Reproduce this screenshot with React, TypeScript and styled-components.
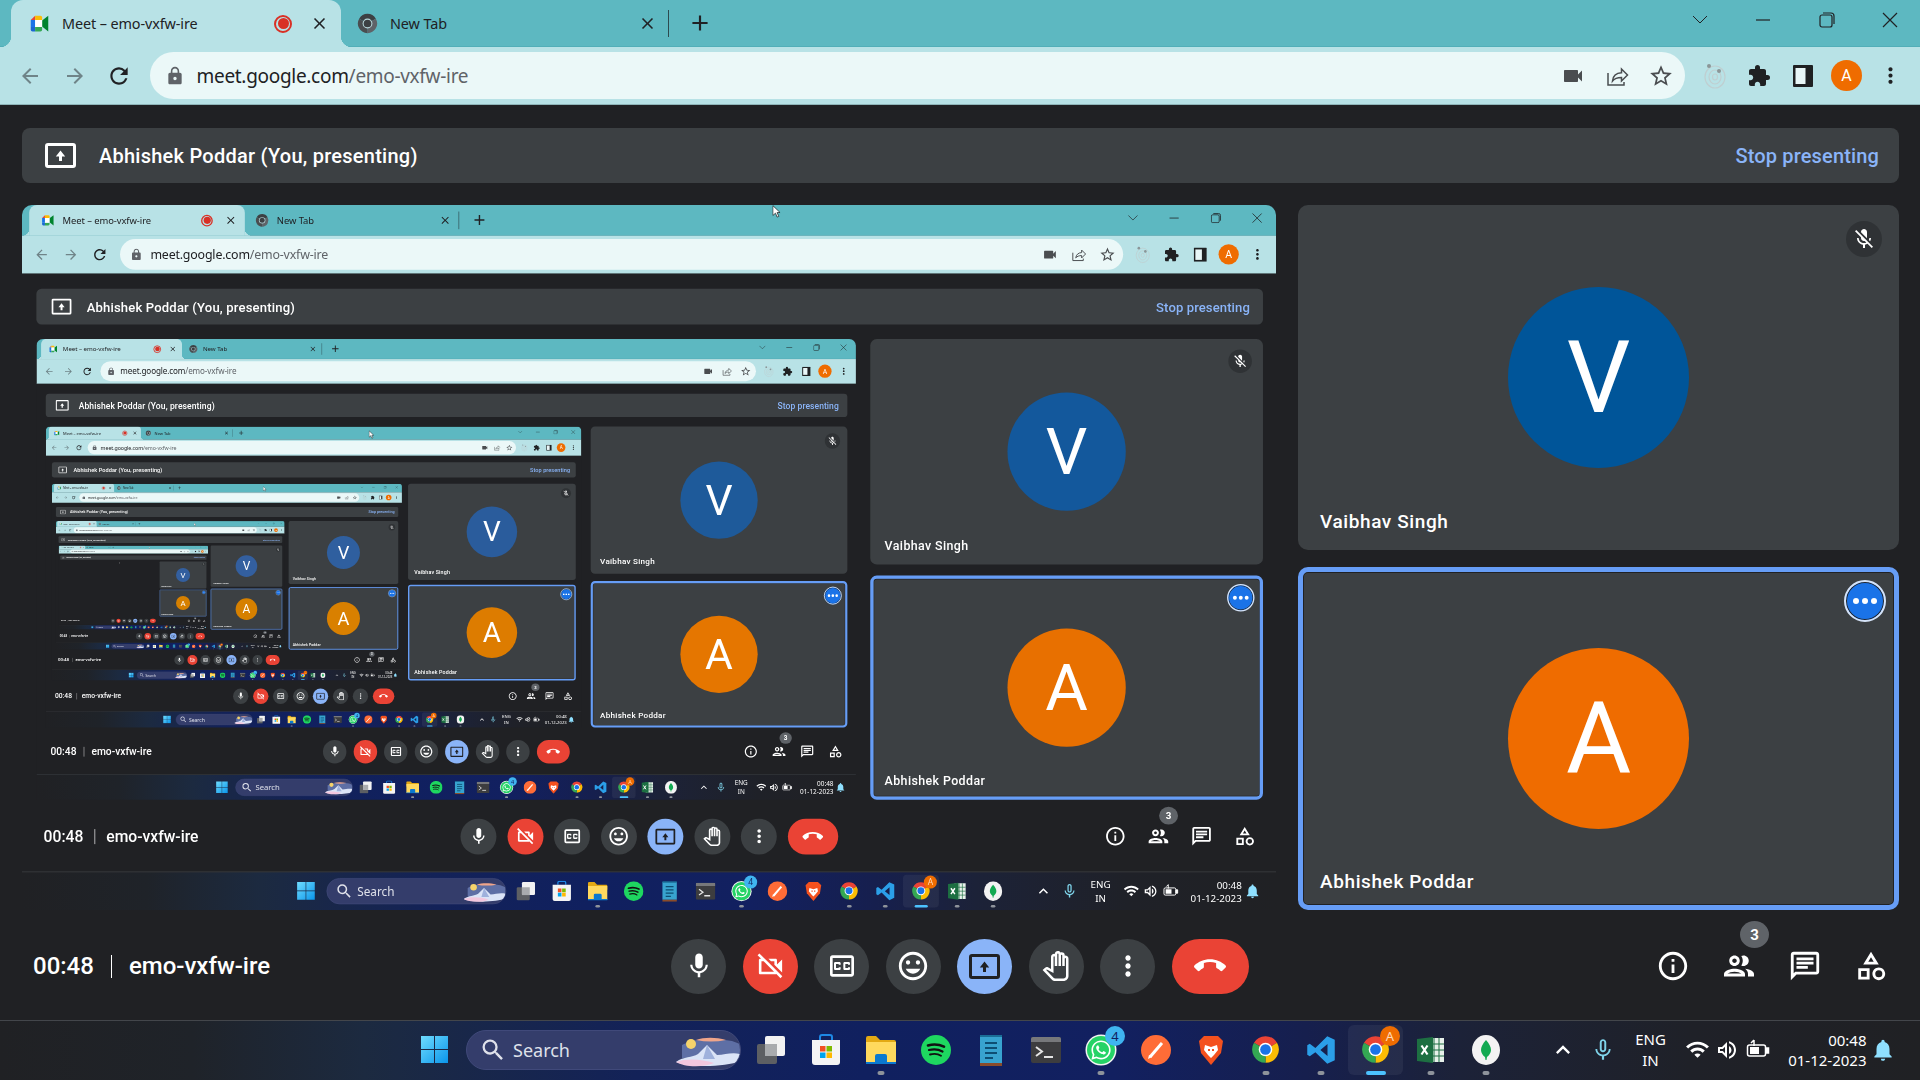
import React from "react";
import styled, { createGlobalStyle } from "styled-components";
import {
  MdMic, MdMicOff, MdOutlineVideocamOff, MdOutlineClosedCaption, MdOutlineMood, MdOutlinePanTool,
  MdMoreVert, MdCallEnd, MdInfoOutline, MdOutlinePeople, MdOutlineChat, MdOutlineCategory, MdLock,
  MdArrowBack, MdArrowForward, MdRefresh, MdClose, MdAdd, MdVideocam, MdStarBorder, MdExtension,
  MdKeyboardArrowUp, MdMicNone, MdWifi, MdOutlineVolumeUp, MdNotifications, MdSearch,
} from "react-icons/md";
import { FaWhatsapp } from "react-icons/fa";

const MAX_DEPTH = 6;
const SHARE_SCALE = 0.6535;
const BLUES = ["#005599", "#13589c", "#1e5a9a", "#2a5c9c", "#2f5f9f", "#335f9f", "#335f9f"];
const ORANGES = ["#ef6c00", "#e87000", "#e57600", "#dd7c00", "#d98000", "#d68000", "#d68000"];
const UI = `"Roboto", "Liberation Sans", sans-serif`;
const WIN = `"Noto Sans", "Open Sans", sans-serif`;

const Global = createGlobalStyle`
  html, body { margin: 0; padding: 0; background: #202124; overflow: hidden; }
  * { box-sizing: border-box; }
`;

const ScreenRoot = styled.div`
  width: 1920px; height: 1080px; display: flex; flex-direction: column;
  background: #202124; overflow: hidden; position: relative; flex: none;
`;

/* ---------- browser chrome ---------- */
const TabStrip = styled.div`
  height: 47px; background: #5db8c1; display: flex; align-items: stretch;
  padding-left: 11px; flex: none; border-bottom: 1px solid #52aeb8;
`;
const ActiveTab = styled.div`
  width: 330px; height: 47px; background: #b8e2e6; border-radius: 12px 12px 0 0;
  display: flex; align-items: center; padding: 0 11px 0 18px; position: relative;
  &::before, &::after {
    content: ""; position: absolute; bottom: 0; width: 11px; height: 11px;
  }
  &::before { left: -11px; background: radial-gradient(circle at 0 0, transparent 11px, #b8e2e6 11.5px); }
  &::after { right: -11px; background: radial-gradient(circle at 100% 0, transparent 11px, #b8e2e6 11.5px); }
`;
const IdleTab = styled.div`
  width: 327px; display: flex; align-items: center; padding: 0 10px 0 16px;
`;
const TabTitle = styled.span`
  font: 400 14.4px ${WIN}; color: #202124; margin-left: 12px; white-space: nowrap; letter-spacing: -0.1px;
`;
const RecDot = styled.span`
  width: 18px; height: 18px; border-radius: 50%; border: 2px solid #d93025; margin-left: auto;
  display: flex; align-items: center; justify-content: center; flex: none;
  &::after { content: ""; width: 11px; height: 11px; border-radius: 50%; background: #d93025; }
`;
const TabClose = styled.span<{ $auto?: boolean }>`
  width: 22px; height: 22px; display: flex; align-items: center; justify-content: center; color: #202124;
  margin-left: ${(p) => (p.$auto ? "auto" : "16px")}; flex: none;
`;
const TabSep = styled.span`
  width: 1px; height: 27px; background: #2c4a4f; align-self: center;
`;
const NewTabBtn = styled.span`
  width: 32px; display: flex; align-items: center; justify-content: center; margin-left: 15px; color: #202124;
`;
const WindowControls = styled.div`
  margin-left: auto; display: grid; grid-template-columns: 64px 62px 66px 60px; color: #202124;
  & > span { display: flex; align-items: center; justify-content: center; height: 40px; }
`;
const Toolbar = styled.div`
  height: 58px; flex: none; background: #b8e2e6; display: flex; align-items: center; padding: 0 8px;
  border-bottom: 1px solid #8fb5b9;
`;
const NavBtn = styled.span<{ $dim?: boolean }>`
  width: 44.5px; display: flex; align-items: center; justify-content: center;
  color: ${(p) => (p.$dim ? "#6f8488" : "#202124")}; flex: none;
`;
const Omnibox = styled.div`
  width: 1535px; height: 47px; margin-left: 8px; border-radius: 24px; background: #ebf8f8;
  display: flex; align-items: center; padding: 0 2px 0 15px; flex: none;
`;
const Url = styled.span`
  font: 400 19px ${WIN}; color: #202124; margin-left: 12px; letter-spacing: -0.3px; white-space: nowrap;
  & > em { font-style: normal; color: #5f6368; }
`;
const OmniIcons = styled.div`margin-left: auto; display: flex; color: #4a4d50;`;
const ToolBtn = styled.span`
  width: 44px; display: flex; align-items: center; justify-content: center; flex: none; color: inherit;
`;
const ToolIcons = styled.div`display: flex; margin-left: 8px; color: #1f2123;`;
const ProfileDot = styled.span`
  width: 31px; height: 31px; border-radius: 50%; background: #ef6c00; color: #fff;
  font: 400 16px ${UI}; display: flex; align-items: center; justify-content: center;
`;

/* ---------- meet page ---------- */
const Page = styled.div`
  flex: 1; min-height: 0; display: flex; flex-direction: column; background: #202124;
`;
const PresentBar = styled.div`
  margin: 23px 21px 22px 22px; height: 55px; background: #3c4043; border-radius: 8px; flex: none;
  display: flex; align-items: center; padding: 0 20px 0 23px;
`;
const PresentTitle = styled.span`
  font: 500 20px ${UI}; color: #fff; margin-left: 23px; letter-spacing: 0.25px; white-space: nowrap;
`;
const StopBtn = styled.span`
  margin-left: auto; font: 500 20px ${UI}; color: #8ab4f8; letter-spacing: 0.15px; white-space: nowrap;
`;
const Stage = styled.div`
  display: grid; grid-template-columns: 1254px 601px; column-gap: 22px; height: 705px;
  margin-left: 22px; flex: none;
`;
const ShareSlot = styled.div`
  width: 1254px; height: 705px; overflow: hidden; border-radius: 10px 10px 0 0; position: relative;
`;
const ScaledFrame = styled.div`
  width: 1920px; height: 1080px; transform: scale(${SHARE_SCALE}); transform-origin: 0 0;
  filter: blur(0.55px); position: relative;
`;
const Cursor = styled.svg<{ $x: number; $y: number }>`
  position: absolute; left: ${(p) => p.$x}px; top: ${(p) => p.$y}px; z-index: 5;
`;
const TileColumn = styled.div`
  display: grid; grid-template-rows: 345px 343px; row-gap: 17px;
`;
const Tile = styled.div<{ $active?: boolean }>`
  background: #3c4043; border-radius: 10px; position: relative; display: flex;
  align-items: center; justify-content: center;
  border: ${(p) => (p.$active ? "5px solid #669df6" : "0")};
  box-shadow: ${(p) => (p.$active ? "inset 0 0 0 1px #202124" : "none")};
`;
const Avatar = styled.div<{ $color: string }>`
  width: 181px; height: 181px; border-radius: 50%; background: ${(p) => p.$color}; color: #fff;
  display: flex; align-items: center; justify-content: center; font: 400 100px ${UI};
`;
const TileName = styled.span<{ $active?: boolean }>`
  position: absolute; left: ${(p) => (p.$active ? 17 : 22)}px; bottom: ${(p) => (p.$active ? 12 : 17)}px;
  font: 500 19px ${UI}; color: #fff; letter-spacing: 0.6px; white-space: nowrap;
`;
const MuteBadge = styled.span`
  position: absolute; top: 16px; right: 17px; width: 36px; height: 36px; border-radius: 50%;
  background: #2f3235; color: #fff; display: flex; align-items: center; justify-content: center;
`;
const MenuBadge = styled.span`
  position: absolute; top: 8px; right: 8px; width: 42px; height: 42px; border-radius: 50%;
  background: #1a73e8; border: 2px solid #d5e3f8; box-shadow: inset 0 0 0 1px #202124;
  display: flex; align-items: center; justify-content: center; gap: 3px;
  & > i { width: 6px; height: 6px; background: #fff; border-radius: 50%; }
`;

/* ---------- controls ---------- */
const ControlBar = styled.div`
  flex: 1; min-height: 0; display: grid; grid-template-columns: 1fr auto 1fr; align-items: center;
  padding: 2px 25px 0 25px;
`;
const MeetingInfo = styled.div`
  display: flex; align-items: center; color: #fff; font: 500 24px ${UI}; white-space: nowrap;
  padding-left: 8px;
`;
const InfoSep = styled.span`
  width: 1px; height: 23px; background: #fff; margin: 0 17px 0 17px;
`;
const CenterButtons = styled.div`display: flex; gap: 16.5px;`;
const RoundBtn = styled.span<{ $bg?: string; $wide?: boolean; $ink?: string }>`
  width: ${(p) => (p.$wide ? 77 : 55)}px; height: 55px; border-radius: 28px;
  background: ${(p) => p.$bg || "#3c4043"}; color: ${(p) => p.$ink || "#fff"};
  display: flex; align-items: center; justify-content: center; flex: none;
`;
const RightButtons = styled.div`
  justify-self: end; display: flex; gap: 18px; color: #fff;
`;
const SideBtn = styled.span`
  width: 48px; height: 48px; display: flex; align-items: center; justify-content: center; position: relative;
`;
const CountBadge = styled.span`
  position: absolute; top: -21px; left: 25px; width: 29px; height: 27px; border-radius: 50%;
  background: #5f6368; color: #fff; font: 700 15px ${UI}; display: flex; align-items: center; justify-content: center;
`;

/* ---------- taskbar ---------- */
const Taskbar = styled.div`
  height: 60px; flex: none; border-top: 1px solid #43464b; display: flex; align-items: center;
  padding: 0 0 2px 407px; color: #fff;
  background: linear-gradient(90deg, #202124 0, #1f2329 10%, #1c2a40 19%, #132258 33%, #10205f 45%,
    #122060 58%, #161f4e 68%, #1c2238 76%, #1f2128 88%, #202124 100%);
`;
const TaskCell = styled.span<{ $on?: boolean }>`
  width: 55px; height: 50px; flex: none; display: flex; align-items: center; justify-content: center;
  position: relative; border-radius: 6px;
  background: ${(p) => (p.$on ? "rgba(255,255,255,.055)" : "transparent")};
`;
const Indicator = styled.i<{ $on?: boolean }>`
  position: absolute; bottom: 0; left: 50%; transform: translateX(-50%); height: 4px; border-radius: 2px;
  width: ${(p) => (p.$on ? 20 : 7)}px; background: ${(p) => (p.$on ? "#4cc2ff" : "#8e939b")};
`;
const SearchPill = styled.div`
  width: 275px; height: 40px; margin: 0 2px 0 4px; border-radius: 20px; background: #343d6b; flex: none;
  display: flex; align-items: center; padding-left: 12px; color: #dfe1ea; position: relative; overflow: hidden;
  border: 1px solid #40497a;
`;
const SearchText = styled.span`font: 400 18px ${WIN}; margin-left: 6px; color: #dfe1ea;`;
const SearchArt = styled.svg`position: absolute; right: 0; top: 0;`;
const TaskBadge = styled.span<{ $bg: string; $ink: string }>`
  position: absolute; top: 1px; right: 3px; width: 20px; height: 20px; border-radius: 50%;
  background: ${(p) => p.$bg}; color: ${(p) => p.$ink}; font: 400 13px ${WIN};
  display: flex; align-items: center; justify-content: center;
`;
const Tray = styled.div`
  margin-left: 29.5px; display: grid; height: 100%; align-items: center; justify-items: center;
  grid-template-columns: 40px 40px 56px 38px 20px 42px 88px 33px;
`;
const LangStack = styled.span`
  font: 400 15px/21px ${WIN}; color: #fff; text-align: center;
`;
const ClockStack = styled.span`
  font: 400 15px/20px ${WIN}; color: #fff; text-align: right; justify-self: end; white-space: nowrap;
`;

/* ---------- drawn icons ---------- */
const MeetLogo = ({ s = 21 }: { s?: number }) => (
  <svg width={s} height={s} viewBox="0 0 24 24">
    <path fill="#ea4335" d="M7 3 2 8h5z" />
    <path fill="#fbbc04" d="M7 3h6a2 2 0 0 1 2 2v3H7z" />
    <path fill="#1a73e8" d="M2 8h5v8H2z" />
    <path fill="#1967d2" d="M2 16h5v5H4a2 2 0 0 1-2-2z" />
    <path fill="#34a853" d="M7 16h8v3a2 2 0 0 1-2 2H7z" />
    <path fill="#00832d" d="M15 8.5v7l7 5.5V3z" />
    <path fill="#fff" d="M7 8h8v8H7z" />
  </svg>
);
const ChromeLogo = ({ s = 29, mono }: { s?: number; mono?: boolean }) => (
  <svg width={s} height={s} viewBox="0 0 24 24">
    <path fill={mono ? "#3c4043" : "#ea4335"} d="M12 12 2.47 6.5A11 11 0 0 1 21.53 6.5z" />
    <path fill={mono ? "#5f6368" : "#fbbc04"} d="M12 12 21.53 6.5A11 11 0 0 1 12 23z" />
    <path fill={mono ? "#4a4d50" : "#34a853"} d="M12 12V23A11 11 0 0 1 2.47 6.5z" />
    <circle cx="12" cy="12" r="5.6" fill={mono ? "#b8d8dc" : "#fff"} />
    <circle cx="12" cy="12" r="4.4" fill={mono ? "#3c4043" : "#1a73e8"} />
  </svg>
);
const PresentIcon = ({ ink = "#fff" }: { ink?: string }) => (
  <svg width="31" height="25" viewBox="0 0 31 25" fill="none">
    <rect x="1.5" y="1.5" width="28" height="22" rx="1.5" stroke={ink} strokeWidth="3" />
    <path fill={ink} d="M14 18h3v-4.500h3.200L15.500 7.500l-4.700 6H14z" />
  </svg>
);
const Chevron = () => (
  <svg width="16" height="10" viewBox="0 0 16 10" fill="none" stroke="#202124" strokeWidth="1"><path d="M1 1l7 7 7-7" /></svg>
);
const Minimize = () => (
  <svg width="16" height="10" viewBox="0 0 16 10" stroke="#202124" strokeWidth="1.2"><path d="M1 5h14" /></svg>
);
const RestoreIcon = () => (
  <svg width="16" height="16" viewBox="0 0 16 16" fill="none" stroke="#202124" strokeWidth="1.2">
    <rect x="1" y="3" width="12" height="12" rx="2" /><path d="M4 1h8a3 3 0 0 1 3 3v8" />
  </svg>
);
const CloseThin = () => (
  <svg width="16" height="16" viewBox="0 0 16 16" stroke="#202124" strokeWidth="1.2"><path d="M1 1l14 14M15 1 1 15" /></svg>
);
const ShareGlyph = () => (
  <svg width="24" height="24" viewBox="0 0 24 24" fill="none" stroke="#4a4d50" strokeWidth="1.5">
    <path d="M3 9v12h16v-3" /><path d="M7.5 17c.5-5 4-8 9-8.2V5l6 6-6 6v-3.6c-4 0-7 1-9 3.6z" />
  </svg>
);
const RadarExt = () => (
  <svg width="24" height="28" viewBox="0 0 24 28" fill="none" stroke="#bfcfd1" strokeWidth="1.2">
    <ellipse cx="12" cy="15" rx="10" ry="11" /><ellipse cx="12" cy="15" rx="6" ry="7" /><ellipse cx="12" cy="15" rx="2.5" ry="3" />
    <circle cx="6" cy="4" r="2" fill="#8b9698" stroke="none" /><circle cx="16" cy="9" r="2" fill="#8b9698" stroke="none" />
  </svg>
);
const SidePanel = () => (
  <svg width="20" height="22" viewBox="0 0 20 22">
    <rect width="20" height="22" rx="1" fill="#1f2123" /><rect x="2.5" y="3" width="10" height="16" fill="#e8f6f7" />
  </svg>
);
const WindowsLogo = () => (
  <svg width="29" height="29" viewBox="0 0 29 29">
    <defs><linearGradient id="winG" x1="0" y1="0" x2="1" y2="1"><stop offset="0" stopColor="#6fdcff" /><stop offset="1" stopColor="#0a95ea" /></linearGradient></defs>
    <path fill="url(#winG)" d="M1 1h13v13H1zM15 1h13v13H15zM1 15h13v13H1zM15 15h13v13H15z" />
  </svg>
);
const TaskView = () => (
  <svg width="30" height="30" viewBox="0 0 30 30">
    <rect x="1" y="9" width="20" height="20" rx="2" fill="#5d5f63" />
    <rect x="9" y="1" width="20" height="20" rx="2" fill="#f2f2f2" />
    <rect x="9" y="9" width="12" height="12" fill="#a9abae" />
  </svg>
);
const StoreIcon = () => (
  <svg width="30" height="32" viewBox="0 0 30 32">
    <path d="M9 6V3a2 2 0 0 1 2-2h8a2 2 0 0 1 2 2v3" fill="none" stroke="#1e88e5" strokeWidth="2" />
    <path fill="#f4f4f4" d="M1 6h28v22a3 3 0 0 1-3 3H4a3 3 0 0 1-3-3z" />
    <path fill="#f25022" d="M9 12h5.5v5.5H9z" /><path fill="#7fba00" d="M15.500 12H21v5.500h-5.500z" />
    <path fill="#00a4ef" d="M9 18.500h5.500V24H9z" /><path fill="#ffb900" d="M15.500 18.500H21V24h-5.500z" />
  </svg>
);
const FolderIcon = () => (
  <svg width="30" height="30" viewBox="0 0 30 30">
    <path fill="#e3a914" d="M0 3a2 2 0 0 1 2-2h8l4 4h14a2 2 0 0 1 2 2v6H0z" />
    <path fill="#ffd95e" d="M0 7h30v21H0z" />
    <path fill="#0b79d0" d="M0 27h30v2H0zM9 21a2 2 0 0 1 2-2h8a2 2 0 0 1 2 2v7H9z" />
  </svg>
);
const SpotifyIcon = () => (
  <svg width="30" height="30" viewBox="0 0 30 30" fill="none" stroke="#111" strokeLinecap="round">
    <circle cx="15" cy="15" r="15" fill="#1ed760" stroke="none" />
    <path strokeWidth="2.6" d="M7 10.5c5-1.5 11-1.2 16 1.2" /><path strokeWidth="2.2" d="M8 15c4.5-1.2 9.5-.8 13.500 1.500" /><path strokeWidth="1.9" d="M9 19.500c4-1 8-.7 11 1.200" />
  </svg>
);
const NotepadIcon = () => (
  <svg width="24" height="32" viewBox="0 0 24 32">
    <path fill="#38a3cf" d="M1 2h22v27H1z" /><path fill="#8a4b2a" d="M1 29h22v3H1z" /><path fill="#1a6d96" d="M1 1h22v2H1z" />
    <path stroke="#0d4e73" strokeWidth="2" d="M6 9h12M6 14h12M6 19h12M6 24h8" />
  </svg>
);
const TerminalIcon = () => (
  <svg width="30" height="26" viewBox="0 0 30 26" fill="none">
    <rect width="30" height="26" rx="2" fill="#3d3d3f" /><path fill="#77787b" d="M0 2a2 2 0 0 1 2-2h26a2 2 0 0 1 2 2v3H0z" />
    <path stroke="#e5e5e5" strokeWidth="2" d="M5 10l6 4.500-6 4.500M13 20h9" />
  </svg>
);
const WhatsAppWrap = styled.span`
  width: 28px; height: 28px; border-radius: 50%; background: #25d366; display: flex; align-items: center;
  justify-content: center; box-shadow: 0 0 0 1.500px #f4f4f4;
`;
const PostmanIcon = () => (
  <svg width="30" height="30" viewBox="0 0 30 30">
    <circle cx="15" cy="15" r="15" fill="#ff6c37" /><path stroke="#fff" strokeWidth="3" d="M9 22 21 8" /><path fill="#fff" d="M7 24l1-4 3 2z" />
  </svg>
);
const BraveIcon = () => (
  <svg width="26" height="30" viewBox="0 0 26 30">
    <path fill="#f4511e" d="M6 1h14l5 5-2 12-10 12L3 18 1 6z" />
    <path fill="#fff" d="M7 10l6 2 6-2 1 5-4 5-3 3-3-3-4-5z" /><path fill="#f4511e" d="M10 14h2v2h-2zM14 14h2v2h-2z" />
  </svg>
);
const VsCodeIcon = () => (
  <svg width="30" height="30" viewBox="0 0 24 24">
    <path fill="#2b9fe8" fillRule="evenodd" d="M17 1 7.500 10.300 3 7 1 8.200v7.600L3 17l4.500-3.300L17 23l6-2.800V3.800zM17.200 7.200 11.500 12l5.700 4.800z" />
  </svg>
);
const ExcelIcon = () => (
  <svg width="28" height="28" viewBox="0 0 28 28" fill="none">
    <path fill="#e7f1ea" d="M10 2h17v24H10z" /><path stroke="#1d6f42" strokeWidth="1" d="M17 2v24M22 2v24M10 8h17M10 14h17M10 20h17" />
    <path fill="#1d6f42" d="M0 3l16-2v26L0 25z" /><path stroke="#fff" strokeWidth="2.200" d="M4.500 9.500l6 9M10.500 9.500l-6 9" />
  </svg>
);
const MongoIcon = () => (
  <svg width="28" height="30" viewBox="0 0 28 30">
    <ellipse cx="14" cy="15" rx="14" ry="15" fill="#f3f3f3" />
    <path fill="#13aa52" d="M14 5c3.500 4 5 7 5 10s-2.500 6-4 7l-.5 3h-1l-.5-3c-1.500-1-4-4-4-7s1.500-6 5-10z" />
  </svg>
);
const BatteryIcon = () => (
  <svg width="24" height="24" viewBox="0 0 24 24" fill="none" stroke="#fff" strokeWidth="1.500">
    <rect x="1.500" y="7" width="18" height="11" rx="2" /><path fill="#fff" d="M20 10h2.500v5H20z" />
    <path fill="#fff" stroke="none" d="M4 9h9v7H4z" /><path stroke="#fff" d="M8 8V2M5 5l3-3" />
  </svg>
);

const Screen: React.FC<{ depth: number }> = ({ depth }) => (
  <ScreenRoot>
    <TabStrip>
      <ActiveTab>
        <MeetLogo />
        <TabTitle>Meet – emo-vxfw-ire</TabTitle>
        <RecDot />
        <TabClose><MdClose size={19} /></TabClose>
      </ActiveTab>
      <IdleTab>
        <ChromeLogo s={21} mono />
        <TabTitle>New Tab</TabTitle>
        <TabClose $auto><MdClose size={19} /></TabClose>
      </IdleTab>
      <TabSep />
      <NewTabBtn><MdAdd size={26} /></NewTabBtn>
      <WindowControls>
        <span><Chevron /></span><span><Minimize /></span><span><RestoreIcon /></span><span><CloseThin /></span>
      </WindowControls>
    </TabStrip>
    <Toolbar>
      <NavBtn $dim><MdArrowBack size={24} /></NavBtn>
      <NavBtn $dim><MdArrowForward size={24} /></NavBtn>
      <NavBtn><MdRefresh size={26} /></NavBtn>
      <Omnibox>
        <MdLock size={20} color="#5f6368" />
        <Url>meet.google.com<em>/emo-vxfw-ire</em></Url>
        <OmniIcons>
          <ToolBtn><MdVideocam size={24} /></ToolBtn>
          <ToolBtn><ShareGlyph /></ToolBtn>
          <ToolBtn><MdStarBorder size={26} /></ToolBtn>
        </OmniIcons>
      </Omnibox>
      <ToolIcons>
        <ToolBtn><RadarExt /></ToolBtn>
        <ToolBtn><MdExtension size={24} /></ToolBtn>
        <ToolBtn><SidePanel /></ToolBtn>
        <ToolBtn><ProfileDot>A</ProfileDot></ToolBtn>
        <ToolBtn><MdMoreVert size={25} /></ToolBtn>
      </ToolIcons>
    </Toolbar>
    <Page>
      <PresentBar>
        <PresentIcon />
        <PresentTitle>Abhishek Poddar (You, presenting)</PresentTitle>
        <StopBtn>Stop presenting</StopBtn>
      </PresentBar>
      <Stage>
        <ShareSlot>
          {depth < MAX_DEPTH && (
            <ScaledFrame>
              <Screen depth={depth + 1} />
              <Cursor $x={depth === 0 ? 1148 : 778} $y={depth === 0 ? 0 : 214} width="13" height="20" viewBox="0 0 13 20">
                <path d="M1 1v15l4-3.500 2.500 6 2.500-1-2.500-6H12z" fill="#fff" stroke="#111" strokeWidth="1" />
              </Cursor>
            </ScaledFrame>
          )}
        </ShareSlot>
        <TileColumn>
          <Tile>
            <Avatar $color={BLUES[depth]}>V</Avatar>
            <MuteBadge><MdMicOff size={24} /></MuteBadge>
            <TileName>Vaibhav Singh</TileName>
          </Tile>
          <Tile $active>
            <Avatar $color={ORANGES[depth]}>A</Avatar>
            <MenuBadge><i /><i /><i /></MenuBadge>
            <TileName $active>Abhishek Poddar</TileName>
          </Tile>
        </TileColumn>
      </Stage>
      <ControlBar>
        <MeetingInfo>00:48<InfoSep />emo-vxfw-ire</MeetingInfo>
        <CenterButtons>
          <RoundBtn><MdMic size={30} /></RoundBtn>
          <RoundBtn $bg="#ea4335"><MdOutlineVideocamOff size={31} /></RoundBtn>
          <RoundBtn><MdOutlineClosedCaption size={32} /></RoundBtn>
          <RoundBtn><MdOutlineMood size={34} /></RoundBtn>
          <RoundBtn $bg="#8ab4f8"><PresentIcon ink="#202124" /></RoundBtn>
          <RoundBtn><MdOutlinePanTool size={30} /></RoundBtn>
          <RoundBtn><MdMoreVert size={32} /></RoundBtn>
          <RoundBtn $bg="#ea4335" $wide><MdCallEnd size={32} /></RoundBtn>
        </CenterButtons>
        <RightButtons>
          <SideBtn><MdInfoOutline size={34} /></SideBtn>
          <SideBtn><MdOutlinePeople size={36} /><CountBadge>3</CountBadge></SideBtn>
          <SideBtn><MdOutlineChat size={34} /></SideBtn>
          <SideBtn><MdOutlineCategory size={34} /></SideBtn>
        </RightButtons>
      </ControlBar>
    </Page>
    <Taskbar>
      <TaskCell><WindowsLogo /></TaskCell>
      <SearchPill>
        <MdSearch size={28} />
        <SearchText>Search</SearchText>
        <SearchArt width="66" height="38" viewBox="0 0 66 38">
          <path fill="#5e6fa5" d="M8 14c10-6 30-8 50-4l8 3v14H8z" />
          <path fill="#f0a58a" d="M22 9c8-3 20-3 30 0-10 2-20 2-30 0z" />
          <circle cx="17" cy="13" r="5" fill="#f5d36b" />
          <path fill="#dbe4f7" d="M2 31c8-6 16-4 22-8l9-9 10 10c8 0 14-3 23-1v7c-14 6-50 7-64 1z" />
          <path fill="#9fb1dc" d="M33 14l-4 14h12z" />
          <path fill="#f3c7de" d="M2 31c8 5 26 6 38 1-12-4-28-5-38-1z" />
        </SearchArt>
      </SearchPill>
      <TaskCell><TaskView /></TaskCell>
      <TaskCell><StoreIcon /></TaskCell>
      <TaskCell><FolderIcon /><Indicator /></TaskCell>
      <TaskCell><SpotifyIcon /></TaskCell>
      <TaskCell><NotepadIcon /></TaskCell>
      <TaskCell><TerminalIcon /></TaskCell>
      <TaskCell>
        <WhatsAppWrap><FaWhatsapp size={22} color="#fff" /></WhatsAppWrap>
        <TaskBadge $bg="#3fb4f0" $ink="#10205f">4</TaskBadge><Indicator />
      </TaskCell>
      <TaskCell><PostmanIcon /></TaskCell>
      <TaskCell><BraveIcon /></TaskCell>
      <TaskCell><ChromeLogo /><Indicator /></TaskCell>
      <TaskCell><VsCodeIcon /><Indicator /></TaskCell>
      <TaskCell $on>
        <ChromeLogo /><TaskBadge $bg="#ef6c00" $ink="#ffd9b8">A</TaskBadge><Indicator $on />
      </TaskCell>
      <TaskCell><ExcelIcon /><Indicator /></TaskCell>
      <TaskCell><MongoIcon /><Indicator /></TaskCell>
      <Tray>
        <MdKeyboardArrowUp size={28} />
        <MdMicNone size={26} color="#7fd4ea" />
        <LangStack>ENG<br />IN</LangStack>
        <MdWifi size={25} />
        <MdOutlineVolumeUp size={24} />
        <BatteryIcon />
        <ClockStack>00:48<br />01-12-2023</ClockStack>
        <MdNotifications size={26} color="#8fe0ff" />
      </Tray>
    </Taskbar>
  </ScreenRoot>
);

export default function App() {
  return (
    <>
      <Global />
      <Screen depth={0} />
    </>
  );
}
